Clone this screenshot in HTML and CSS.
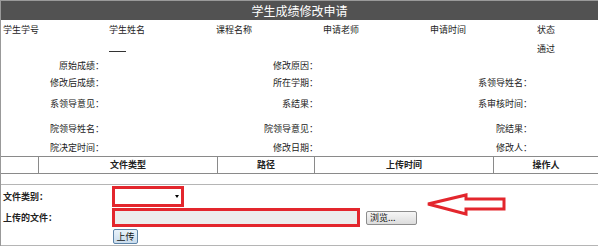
FILE: index.html
```html
<!DOCTYPE html>
<html lang="zh">
<head>
<meta charset="utf-8">
<title>学生成绩修改申请</title>
<link rel="stylesheet" href="styles.css">
</head>
<body>
<div class="page">
  <div class="title">学生成绩修改申请</div>
  <div class="info">
    <div class="th">学生学号</div>
    <div class="th">学生姓名</div>
    <div class="th">课程名称</div>
    <div class="th">申请老师</div>
    <div class="th">申请时间</div>
    <div class="th">状态</div>

    <div class="td"></div>
    <div class="td"><span class="dash"></span></div>
    <div class="td"></div>
    <div class="td"></div>
    <div class="td"></div>
    <div class="td">通过</div>

    <div class="lbl">原始成绩：</div><div class="val"></div>
    <div class="lbl">修改原因：</div><div class="val"></div>
    <div class="lbl"></div><div class="val"></div>

    <div class="lbl">修改后成绩：</div><div class="val"></div>
    <div class="lbl">所在学期：</div><div class="val"></div>
    <div class="lbl">系领导姓名：</div><div class="val"></div>

    <div class="lbl">系领导意见：</div><div class="val"></div>
    <div class="lbl">系结果：</div><div class="val"></div>
    <div class="lbl">系审核时间：</div><div class="val"></div>

    <div class="lbl">院领导姓名：</div><div class="val"></div>
    <div class="lbl">院领导意见：</div><div class="val"></div>
    <div class="lbl">院结果：</div><div class="val"></div>

    <div class="lbl">院决定时间：</div><div class="val"></div>
    <div class="lbl">修改日期：</div><div class="val"></div>
    <div class="lbl">修改人：</div><div class="val"></div>
  </div>

  <div class="files">
    <div class="fh"></div>
    <div class="fh">文件类型</div>
    <div class="fh">路径</div>
    <div class="fh">上传时间</div>
    <div class="fh">操作人</div>
  </div>

  <div class="upload">
    <div class="ulbl">文件类别：</div>
    <div class="ufield"><div class="select"><span class="caret"></span></div></div>
    <div class="ulbl">上传的文件：</div>
    <div class="ufield"><div class="filebox"></div><span class="browse">浏览...</span></div>
    <div class="ulbl"></div>
    <div class="ufield"><span class="submit">上传</span></div>
    <svg class="arrow" width="82" height="24" viewBox="0 0 82 24">
      <polygon points="2,11 40,2 40,6 78,6 78,16 40,16 40,21" fill="none" stroke="#e3262d" stroke-width="3" stroke-linejoin="miter"/>
    </svg>
  </div>
</div>
</body>
</html>
```

FILE: styles.css
```css
html, body {
  margin: 0;
  padding: 0;
  background: #fff;
}
body {
  font-family: "Noto Sans CJK SC", "Noto Sans", sans-serif;
  font-size: 9px;
  color: #222;
}
.page {
  width: 598px;
  border-left: 1px solid #999;
  box-sizing: border-box;
}
.title {
  height: 19px;
  border-top: 1px solid #9a9a9a;
  background: #525252;
  color: #fff;
  font-size: 12px;
  line-height: 19px;
  text-align: center;
}
.info {
  display: grid;
  grid-template-columns: 106px 107px 107px 107px 107px 1fr;
  grid-template-rows: 20px 17px 17px 17px 26px 24px 13px;
  align-items: center;
  margin-bottom: 2px;
}
.th, .td {
  padding-left: 2px;
  line-height: 12px;
  white-space: nowrap;
}
.td .dash {
  display: inline-block;
  width: 17px;
  margin-top: 8px;
  border-top: 1px solid #333;
  vertical-align: top;
}
.lbl {
  text-align: right;
  padding-right: 3px;
  line-height: 12px;
  white-space: nowrap;
}
.files {
  display: grid;
  grid-template-columns: 37px 179px 97px 179px 1fr;
  border-top: 1px solid #8a8a8a;
  border-bottom: 1px solid #8a8a8a;
  height: 16px;
}
.fh {
  border-left: 1px solid #8a8a8a;
  font-weight: bold;
  text-align: center;
  line-height: 16px;
}
.fh:first-child {
  border-left: none;
}
.upload {
  position: relative;
  margin-top: 10px;
  border-top: 1px solid #b5b5b5;
  border-bottom: 1px solid #b5b5b5;
  display: grid;
  grid-template-columns: 111px 1fr;
  grid-template-rows: 22px 21px 17px;
  height: 62px;
  box-sizing: border-box;
  padding-top: 0;
}
.ulbl {
  font-weight: bold;
  padding-left: 2px;
  display: flex;
  align-items: center;
}
.ufield {
  display: flex;
  align-items: center;
}
.select {
  position: relative;
  width: 66px;
  height: 15px;
  border: 3px solid #e3262d;
  background: #fff;
}
.caret {
  position: absolute;
  right: 2px;
  top: 6px;
  width: 0;
  height: 0;
  border-left: 2px solid transparent;
  border-right: 2px solid transparent;
  border-top: 3px solid #000;
}
.filebox {
  width: 242px;
  height: 13px;
  border: 3px solid #e3262d;
  background: #ececec;
}
.browse {
  margin-left: 6px;
  width: 46px;
  height: 12px;
  line-height: 12px;
  border: 1px solid #8d8d8d;
  border-radius: 2px;
  background: linear-gradient(#f6f6f6, #dcdcdc);
  text-align: left;
  padding-left: 3px;
  box-sizing: content-box;
  color: #111;
}
.submit {
  margin-left: 1px;
  width: 23px;
  height: 13px;
  line-height: 13px;
  border: 1px solid #5d84a8;
  border-radius: 2px;
  background: linear-gradient(#e8f2fa, #c9dced);
  text-align: center;
  color: #111;
}
.arrow {
  position: absolute;
  left: 425px;
  top: 8px;
}
```
